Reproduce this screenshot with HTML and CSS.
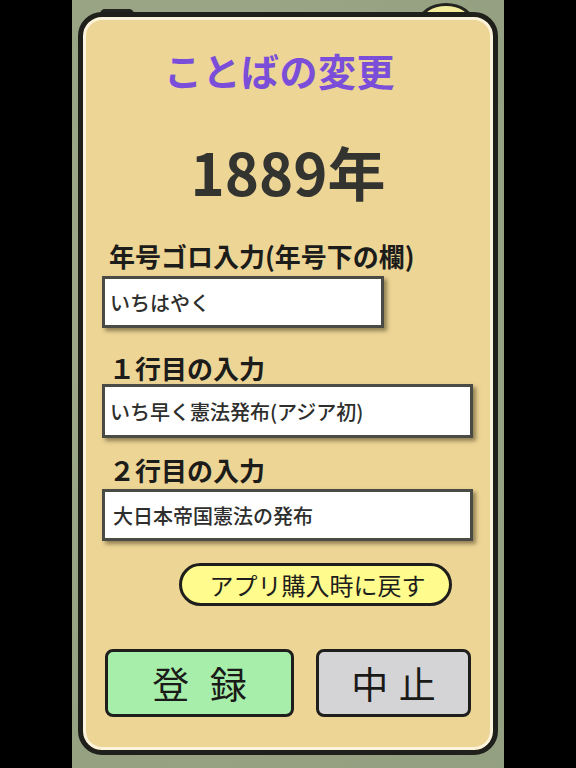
FILE: index.html
```html
<!DOCTYPE html>
<html lang="ja">
<head>
<meta charset="utf-8">
<title>ことばの変更</title>
<link rel="stylesheet" href="styles.css">
</head>
<body>
<div class="stage">
  <div class="deco-pill"></div>
  <div class="deco-ball"></div>
  <div class="card">
    <h1 class="title">ことばの変更</h1>
    <div class="year">1889年</div>
    <div class="label label-first">年号ゴロ入力(年号下の欄)</div>
    <div class="field field-short">いちはやく</div>
    <div class="label label-second">１行目の入力</div>
    <div class="field field-long field-second">いち早く憲法発布(アジア初)</div>
    <div class="label label-third">２行目の入力</div>
    <div class="field field-long field-third">大日本帝国憲法の発布</div>
    <div class="reset">アプリ購入時に戻す</div>
    <div class="actions">
      <div class="btn btn-ok">登 録</div>
      <div class="btn btn-cancel">中 止</div>
    </div>
  </div>
</div>
</body>
</html>
```

FILE: styles.css
```css
html, body {
  margin: 0;
  padding: 0;
  background: #000;
}
body {
  width: 576px;
  height: 768px;
  overflow: hidden;
  font-family: "Noto Sans CJK JP", "Noto Sans", sans-serif;
}
.stage {
  position: relative;
  width: 432px;
  height: 768px;
  margin-left: 72px;
  box-sizing: border-box;
  padding-top: 12px;
  padding-left: 6px;
  background: radial-gradient(ellipse at 30% 40%, #a2ab8b 0%, #97a383 60%, #929f80 100%);
}
.deco-pill {
  position: absolute;
  left: 28px;
  top: 9px;
  width: 34px;
  height: 10px;
  border-radius: 6px;
  background: #23231f;
}
.deco-ball {
  position: absolute;
  left: 346px;
  top: 3px;
  width: 56px;
  height: 40px;
  border-radius: 50%;
  background: #f3ec9a;
  border: 3px solid #23231f;
  box-sizing: border-box;
}
.card {
  position: relative;
  z-index: 1;
  width: 420px;
  height: 743px;
  box-sizing: border-box;
  border: 5px solid #1f1f1b;
  border-radius: 24px;
  background: #edd596;
  box-shadow: inset 0 0 0 3px #fcf4dc;
}
.title {
  margin: 31px 0 0 81px;
  font-size: 38px;
  line-height: 44px;
  font-weight: 700;
  color: #7a4ed8;
  letter-spacing: 0.5px;
}
.year {
  margin-top: 47px;
  text-align: center;
  font-size: 58px;
  line-height: 64px;
  font-weight: 700;
  color: #333330;
}
.label {
  margin-left: 26px;
  font-size: 26px;
  line-height: 30px;
  font-weight: 700;
  color: #1c1c1a;
}
.label-first { margin-top: 38px; }
.label-second { margin-top: 25px; }
.label-third { margin-top: 17px; }
.field {
  display: flex;
  align-items: center;
  box-sizing: border-box;
  margin-left: 19px;
  height: 52px;
  padding-left: 5px;
  background: #fff;
  border: 3px solid #4b4b45;
  box-shadow: 3px 3px 4px rgba(70, 60, 30, 0.55);
  font-size: 20px;
  font-weight: 500;
  color: #2e2e2c;
}
.field-short {
  width: 282px;
  margin-top: 5px;
}
.field-long {
  width: 371px;
}
.field-second {
  margin-top: 1px;
  height: 54px;
}
.field-third {
  margin-top: 4px;
  padding-left: 8px;
}
.reset {
  margin: 22px 0 0 96px;
  width: 273px;
  height: 43px;
  box-sizing: border-box;
  border: 3px solid #1e1e1c;
  border-radius: 22px;
  background: #fffb8c;
  display: flex;
  align-items: center;
  justify-content: center;
  font-size: 24px;
  color: #1e1e1c;
  padding-left: 4px;
}
.actions {
  display: flex;
  gap: 22px;
  margin: 43px 0 0 22px;
}
.btn {
  box-sizing: border-box;
  height: 68px;
  border: 3px solid #1e1e1c;
  border-radius: 8px;
  display: flex;
  align-items: center;
  justify-content: center;
  font-size: 37px;
  color: #1a1a18;
}
.btn-ok {
  width: 189px;
  background: #a7eeab;
  word-spacing: 12px;
}
.btn-cancel {
  width: 155px;
  background: #d4d4d7;
  word-spacing: 2px;
}
```
